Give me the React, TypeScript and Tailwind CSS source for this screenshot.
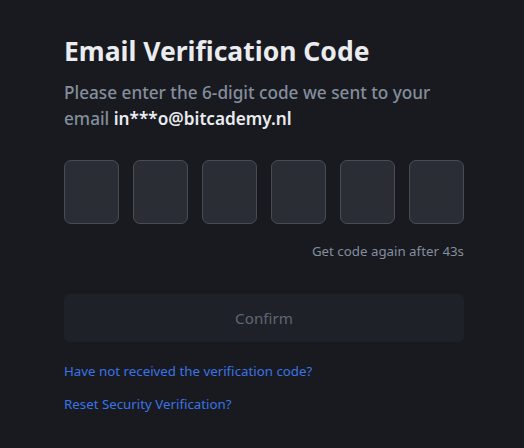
export default function App() {
  const boxes = [0, 1, 2, 3, 4, 5]

  return (
    <div
      className="min-h-screen w-full bg-[#181a20] text-white"
      style={{ fontFamily: '"Noto Sans", "Open Sans", sans-serif' }}
    >
      <div className="ml-[64px] w-[400px] pt-[34px]">
        <h1 className="text-[26.5px] font-bold leading-[34px] text-[#eaecef]">Email Verification Code</h1>
        <p className="mt-[12px] text-[17.2px] font-medium leading-[26px] text-[#848e9c]">
          Please enter the 6-digit code we sent to your email{' '}
          <span className="font-semibold text-[#eaecef]">in***o@bitcademy.nl</span>
        </p>

        <div className="mt-[28px] flex gap-[14px]">
          {boxes.map((i) => (
            <input
              key={i}
              type="text"
              maxLength={1}
              className="h-[64px] w-[55px] rounded-[7px] border border-[#474d57] bg-[#2b2d35] text-center text-xl text-white outline-none"
            />
          ))}
        </div>

        <p className="mt-[17px] text-right text-[13.3px] leading-[20px] text-[#848e9c]">Get code again after 43s</p>

        <button
          type="button"
          disabled
          className="mt-[33px] h-[48px] w-full rounded-[6px] bg-[#1f2128] text-[15.2px] text-[#5e6673]"
        >
          Confirm
        </button>

        <div className="mt-[19px] flex flex-col gap-[13px] text-[13.3px] leading-[20px] text-[#3b74e6]">
          <a href="#">Have not received the verification code?</a>
          <a href="#">Reset Security Verification?</a>
        </div>
      </div>
    </div>
  )
}
